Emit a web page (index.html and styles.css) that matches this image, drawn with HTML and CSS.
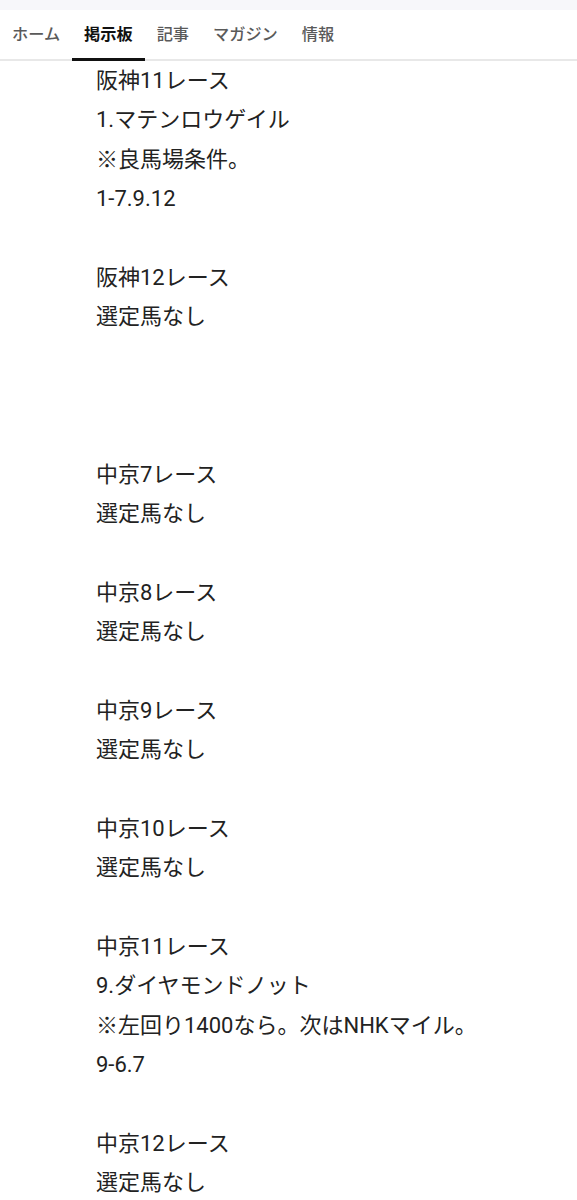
FILE: index.html
```html
<!DOCTYPE html>
<html lang="ja">
<head>
<meta charset="utf-8">
<link rel="stylesheet" href="styles.css">
</head>
<body>
<div class="topband"></div>
<nav class="tabs">
  <span class="tab">ホーム</span>
  <span class="tab active">掲示板</span>
  <span class="tab">記事</span>
  <span class="tab">マガジン</span>
  <span class="tab">情報</span>
</nav>
<main class="post">
  <p>阪神11レース</p>
  <p>1.マテンロウゲイル</p>
  <p>※良馬場条件。</p>
  <p>1-7.9.12</p>
  <p class="blank"></p>
  <p>阪神12レース</p>
  <p>選定馬なし</p>
  <p class="blank"></p>
  <p class="blank"></p>
  <p class="blank"></p>
  <p>中京7レース</p>
  <p>選定馬なし</p>
  <p class="blank"></p>
  <p>中京8レース</p>
  <p>選定馬なし</p>
  <p class="blank"></p>
  <p>中京9レース</p>
  <p>選定馬なし</p>
  <p class="blank"></p>
  <p>中京10レース</p>
  <p>選定馬なし</p>
  <p class="blank"></p>
  <p>中京11レース</p>
  <p>9.ダイヤモンドノット</p>
  <p>※左回り1400なら。次はNHKマイル。</p>
  <p>9-6.7</p>
  <p class="blank"></p>
  <p>中京12レース</p>
  <p>選定馬なし</p>
</main>
</body>
</html>
```
FILE: styles.css
```css
html, body {
  margin: 0;
  padding: 0;
  background: #ffffff;
  font-family: Roboto, "Noto Sans CJK JP", sans-serif;
}
.topband {
  height: 10px;
  background: #f7f7fa;
}
.tabs {
  display: flex;
  height: 49px;
  border-bottom: 2px solid #e8e8e8;
  font-family: "Noto Sans CJK JP", sans-serif;
}
.tab {
  padding: 0 12px;
  font-size: 16.2px;
  line-height: 47px;
  color: #5a5a5a;
  font-weight: 500;
}
.tab.active {
  color: #111111;
  font-weight: 700;
  border-bottom: 3px solid #111111;
  margin-bottom: -2px;
}
.post {
  padding-left: 96px;
}
.post p {
  margin: 0;
  font-size: 22px;
  line-height: 39.36px;
  height: 39.36px;
  color: #222222;
}
```
